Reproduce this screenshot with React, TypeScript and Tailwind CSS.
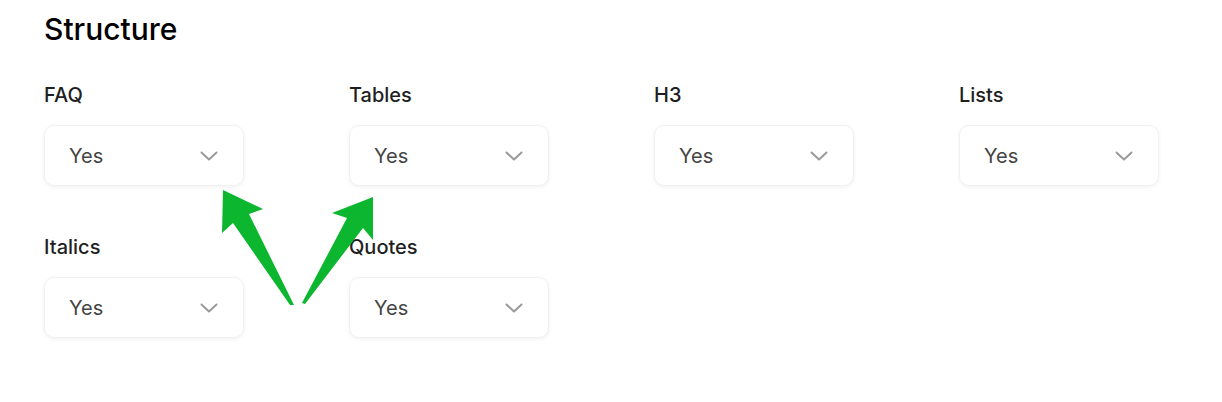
import React from "react";

const fields = [
    { label: "FAQ", value: "Yes" },
    { label: "Tables", value: "Yes" },
    { label: "H3", value: "Yes" },
    { label: "Lists", value: "Yes" },
    { label: "Italics", value: "Yes" },
    { label: "Quotes", value: "Yes" },
];

const Chevron = () => (
    <svg width="18" height="10" viewBox="0 0 18 10" fill="none" className="text-[#9a9a9a]">
        <path d="M1.5 1.5 L9 8.5 L16.5 1.5" stroke="currentColor" strokeWidth="2" strokeLinecap="round" strokeLinejoin="round" />
    </svg>
);

const SelectBox = ({ label, value }: { label: string; value: string }) => (
    <div className="w-[305px]">
        <div className="text-[20px] leading-[28px] font-medium text-[#1f1f1f]">{label}</div>
        <button className="mt-[16px] w-[200px] h-[61px] flex items-center justify-between pl-[24px] pr-[25px] bg-white rounded-[10px] border border-[#f1f1f1] shadow-[0_1px_4px_rgba(0,0,0,0.06)]">
            <span className="text-[20px] text-[#444444]">{value}</span>
            <Chevron />
        </button>
    </div>
);

const Arrows = () => (
    <svg className="absolute left-0 top-0 pointer-events-none" width="1222" height="402" viewBox="0 0 1222 402">
        <polygon points="223,190 263,209 249,214 294,305 290,305 233,223 222,233" fill="#0cb62f" />
        <polygon points="373,197 373,240 363,228 305,304 302,303 347,218 332,213" fill="#0cb62f" />
    </svg>
);

export default function App() {
    return (
        <div className="relative w-[1222px] h-[402px] bg-white" style={{ fontFamily: "Inter, 'Noto Sans', sans-serif" }}>
            <div className="pl-[44px] pt-[10px]">
                <h1 className="text-[30px] leading-[38px] font-medium text-black">Structure</h1>
                <div className="mt-[33px] flex flex-wrap gap-y-[47px] w-[1220px]">
                    {fields.map((f) => (
                        <SelectBox key={f.label} label={f.label} value={f.value} />
                    ))}
                </div>
            </div>
            <Arrows />
        </div>
    );
}
